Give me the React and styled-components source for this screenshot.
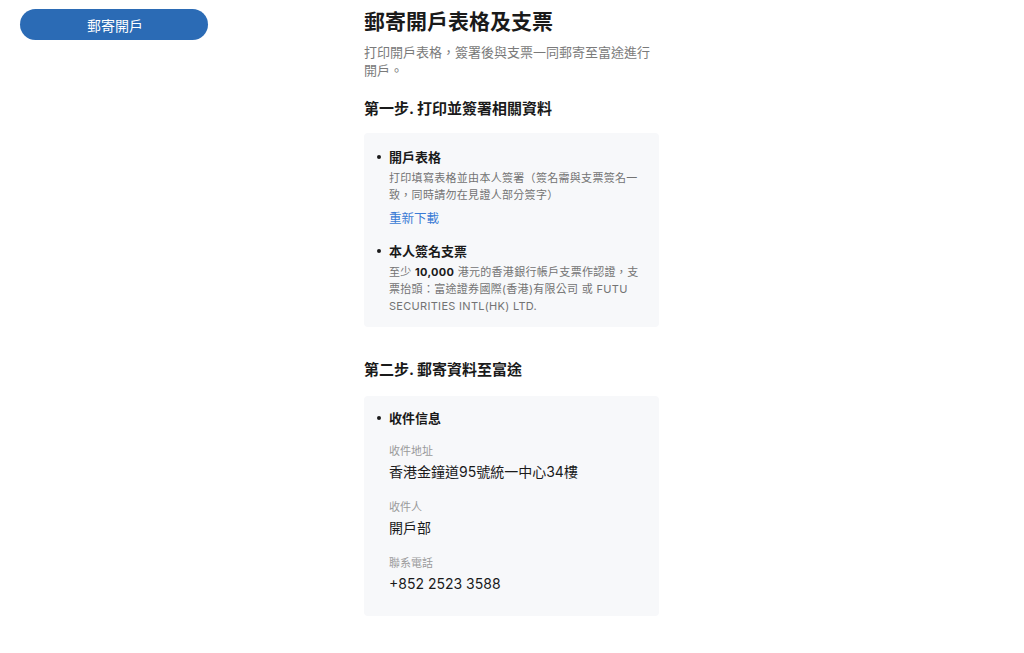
import React from 'react';
import styled, { createGlobalStyle } from 'styled-components';

const GlobalStyle = createGlobalStyle`
    html, body {
        margin: 0;
        padding: 0;
        background: #ffffff;
    }

    body {
        font-family: Inter, "Noto Sans CJK TC", sans-serif;
        color: #1f1f1f;
    }
`;

const Page = styled.div`
    display: flex;
    align-items: flex-start;
    padding: 8px 0 0 20px;
    min-height: 645px;
    box-sizing: border-box;
`;

const Sidebar = styled.div`
    width: 344px;
    flex-shrink: 0;
    padding-top: 1px;
`;

const NavButton = styled.button`
    width: 188px;
    height: 31px;
    border: 0;
    border-radius: 16px;
    background-color: #2b6bb5;
    color: #ffffff;
    font-family: inherit;
    font-size: 14px;
    padding: 0 0 0 2px;
    cursor: pointer;
`;

const Main = styled.div`
    width: 295px;
`;

const Title = styled.h1`
    margin: 0;
    font-size: 21px;
    line-height: 28px;
    font-weight: 700;
    color: #1a1a1a;
`;

const Subtitle = styled.p`
    margin: 7px 0 0;
    font-size: 13px;
    line-height: 18px;
    color: #7a7a7a;
`;

const StepTitle = styled.h2`
    margin: ${props => props.top}px 0 0;
    font-size: 15px;
    line-height: 20px;
    font-weight: 700;
    color: #1a1a1a;
`;

const Card = styled.div`
    margin-top: ${props => props.top}px;
    background-color: #f7f8fa;
    border-radius: 4px;
    padding: ${props => props.pad};
`;

const Item = styled.div`
    & + & {
        margin-top: 14px;
    }
`;

const ItemTitle = styled.div`
    position: relative;
    padding-left: 25px;
    font-size: 13px;
    line-height: 18px;
    font-weight: 700;
    color: #1a1a1a;

    &::before {
        content: '';
        position: absolute;
        left: 13px;
        top: 7px;
        width: 4px;
        height: 4px;
        border-radius: 50%;
        background: #1a1a1a;
    }
`;

const ItemBody = styled.div`
    padding: 0 14px 0 25px;
`;

const Desc = styled.p`
    margin: 4px 0 0;
    font-size: 11px;
    letter-spacing: 0.3px;
    line-height: 17px;
    color: #737373;

    b {
        color: #1a1a1a;
        font-weight: 700;
    }
`;

const Link = styled.a`
    display: block;
    margin-top: 6px;
    font-size: 12.5px;
    line-height: 18px;
    color: #3a7bd5;
    text-decoration: none;
    cursor: pointer;
`;

const Field = styled.div`
    margin-top: ${props => (props.first ? 16 : 17)}px;
`;

const FieldLabel = styled.div`
    font-size: 11px;
    line-height: 16px;
    color: #9a9a9a;
`;

const FieldValue = styled.div`
    margin-top: 3px;
    font-size: 14px;
    line-height: 20px;
    color: #1a1a1a;
`;

const fields = [
    { label: '收件地址', value: '香港金鐘道95號統一中心34樓' },
    { label: '收件人', value: '開戶部' },
    { label: '聯系電話', value: '+852 2523 3588' },
];

const App = () => (
    <>
        <GlobalStyle />
        <Page>
            <Sidebar>
                <NavButton>郵寄開戶</NavButton>
            </Sidebar>
            <Main>
                <Title>郵寄開戶表格及支票</Title>
                <Subtitle>打印開戶表格，簽署後與支票一同郵寄至富途進行開戶。</Subtitle>

                <StepTitle top={20}>第一步. 打印並簽署相關資料</StepTitle>
                <Card top={14} pad="15px 0 12px">
                    <Item>
                        <ItemTitle>開戶表格</ItemTitle>
                        <ItemBody>
                            <Desc>打印填寫表格並由本人簽署（簽名需與支票簽名一致，同時請勿在見證人部分簽字）</Desc>
                            <Link>重新下載</Link>
                        </ItemBody>
                    </Item>
                    <Item>
                        <ItemTitle>本人簽名支票</ItemTitle>
                        <ItemBody>
                            <Desc>
                                至少 <b>10,000</b> 港元的香港銀行帳戶支票作認證，支票抬頭：富途證券國際(香港)有限公司 或 FUTU
                                SECURITIES INTL(HK) LTD.
                            </Desc>
                        </ItemBody>
                    </Item>
                </Card>

                <StepTitle top={33}>第二步. 郵寄資料至富途</StepTitle>
                <Card top={16} pad="13px 0 22px">
                    <ItemTitle>收件信息</ItemTitle>
                    <ItemBody>
                        {fields.map((field, index) => (
                            <Field key={field.label} first={index === 0}>
                                <FieldLabel>{field.label}</FieldLabel>
                                <FieldValue>{field.value}</FieldValue>
                            </Field>
                        ))}
                    </ItemBody>
                </Card>
            </Main>
        </Page>
    </>
);

export default App;
